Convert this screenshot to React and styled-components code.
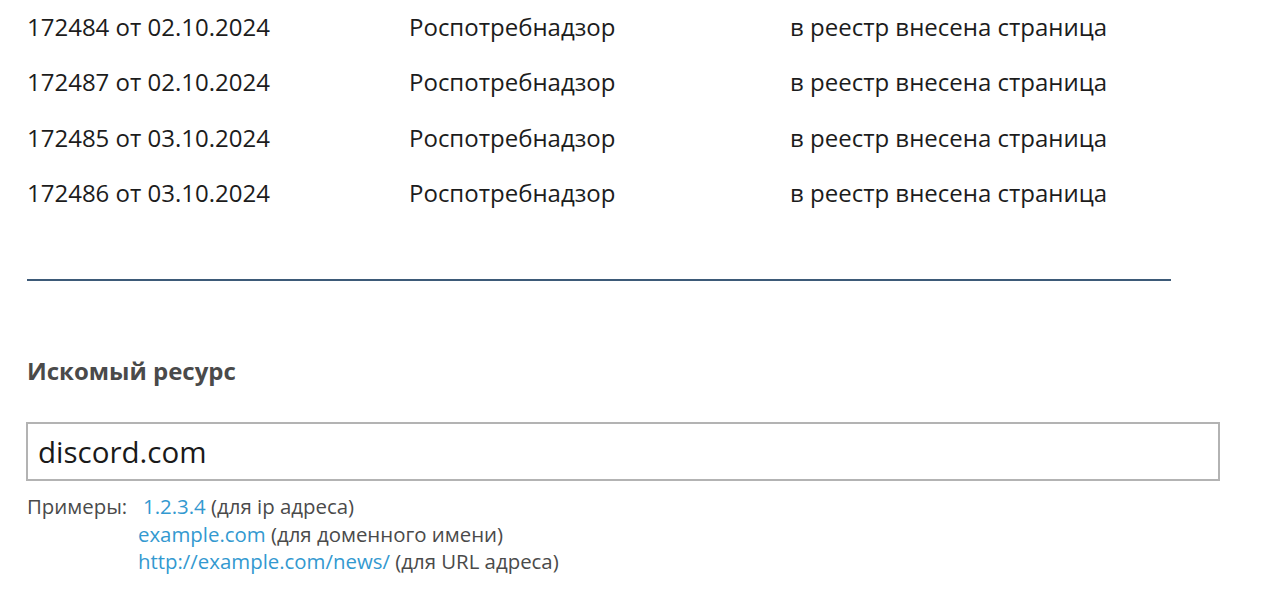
import React from 'react'
import styled, { createGlobalStyle } from 'styled-components'

const rows = [
  ['172484 от 02.10.2024', 'Роспотребнадзор', 'в реестр внесена страница'],
  ['172487 от 02.10.2024', 'Роспотребнадзор', 'в реестр внесена страница'],
  ['172485 от 03.10.2024', 'Роспотребнадзор', 'в реестр внесена страница'],
  ['172486 от 03.10.2024', 'Роспотребнадзор', 'в реестр внесена страница'],
]

const examples = [
  ['1.2.3.4', '(для ip адреса)'],
  ['example.com', '(для доменного имени)'],
  ['http://example.com/news/', '(для URL адреса)'],
]

const App = () => {
  return (
    <Page>
      <GlobalStyle />
      <Table>
        {rows.map((row, index) => (
          <Row key={index}>
            {row.map((cell, i) => (
              <Cell key={i}>{cell}</Cell>
            ))}
          </Row>
        ))}
      </Table>
      <Divider />
      <Label>Искомый ресурс</Label>
      <Input defaultValue='discord.com' />
      <Examples>
        <ExamplesTitle>Примеры:</ExamplesTitle>
        <ExampleList>
          {examples.map(([link, note], index) => (
            <Example key={index} $first={index === 0}>
              <a href='#'>{link}</a> {note}
            </Example>
          ))}
        </ExampleList>
      </Examples>
    </Page>
  )
}

export default App

const GlobalStyle = createGlobalStyle`
  html, body {
    margin: 0;
    background: #fff;
  }
  body {
    font-family: 'Open Sans', 'Noto Sans', sans-serif;
    color: #1a1a1a;
  }
`

const Page = styled.div`
  padding: 0 0 0 27px;
  width: 1193px;
`

const Table = styled.div`
  display: flex;
  flex-direction: column;
`

const Row = styled.div`
  display: grid;
  grid-template-columns: 382px 381px 1fr;
  height: 55.5px;
  align-items: center;
`

const Cell = styled.div`
  font-size: 24px;
  line-height: 30px;
  margin-top: -2px;
  color: #1c1c1c;
`

const Divider = styled.hr`
  margin: 57px 0 0;
  width: 1144px;
  height: 2px;
  border: none;
  background: #3d5a78;
`

const Label = styled.div`
  margin-top: 75px;
  font-size: 24px;
  line-height: 30px;
  font-weight: 700;
  color: #4a4a4a;
`

const Input = styled.input`
  display: block;
  box-sizing: border-box;
  margin: 36px 0 0 -1px;
  width: 1194px;
  height: 59px;
  padding: 0 10px;
  border: 2px solid #b3b3b3;
  font-family: 'Open Sans', 'Noto Sans', sans-serif;
  font-size: 29.5px;
  color: #1a1a1a;
  outline: none;
`

const Examples = styled.div`
  display: flex;
  margin-top: 12px;
  font-size: 20.4px;
  line-height: 27.5px;
  color: #4a4a4a;
`

const ExamplesTitle = styled.div`
  width: 111px;
`

const ExampleList = styled.div`
  display: flex;
  flex-direction: column;
`

const Example = styled.div`
  padding-left: ${(props) => (props.$first ? '5px' : '0')};
  a {
    color: #3399d0;
    text-decoration: none;
  }
`
